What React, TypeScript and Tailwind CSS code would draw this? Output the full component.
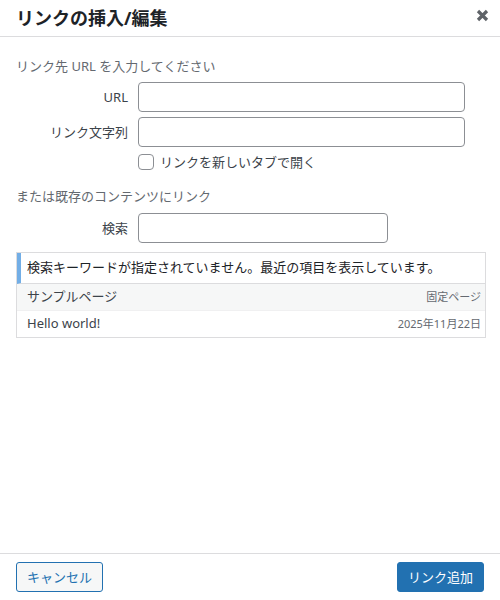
import React from "react";

export default function App() {
  return (
    <div
      className="w-[500px] h-[600px] bg-white flex flex-col text-[#3c434a] overflow-hidden"
      style={{ fontFamily: '"Noto Sans", "Noto Sans CJK JP", sans-serif' }}
    >
      {/* Header */}
      <div className="h-[37px] shrink-0 border-b border-[#dcdcde] flex items-center justify-between pl-4 pr-[11px]">
        <h1 className="text-[18px] font-bold leading-[36px] text-[#1d2327]">リンクの挿入/編集</h1>
        <button className="w-[13px] h-[13px] flex items-center justify-center text-[#5f6368] -mt-[6px]">
          <svg width="13" height="13" viewBox="0 0 13 13" fill="none" stroke="currentColor">
            <path d="M2 2L11 11M11 2L2 11" strokeWidth="3.2" strokeLinecap="butt" />
          </svg>
        </button>
      </div>

      {/* Body */}
      <div className="flex-1 px-4 pt-[19px] text-[13px]">
        <p className="leading-[20px] text-[#646970]">リンク先 URL を入力してください</p>

        <div className="mt-[6px] flex flex-col gap-[5px]">
          <div className="flex items-center gap-[10px]">
            <label className="w-[112px] text-right leading-[20px]">URL</label>
            <input className="w-[327px] h-[30px] border border-[#8c8f94] rounded-[4px] px-2 outline-none" />
          </div>
          <div className="flex items-center gap-[10px]">
            <label className="w-[112px] text-right leading-[20px]">リンク文字列</label>
            <input className="w-[327px] h-[30px] border border-[#8c8f94] rounded-[4px] px-2 outline-none" />
          </div>
        </div>

        <div className="mt-[7px] flex items-center pl-[122px] gap-[6px]">
          <span className="w-4 h-4 border border-[#8c8f94] rounded-[4px] bg-white shrink-0" />
          <span className="leading-[16px]">リンクを新しいタブで開く</span>
        </div>

        <p className="mt-[16px] leading-[20px] text-[#646970]">または既存のコンテンツにリンク</p>

        <div className="mt-[7px] flex items-center gap-[10px]">
          <label className="w-[112px] text-right leading-[20px]">検索</label>
          <input className="w-[250px] h-[30px] border border-[#8c8f94] rounded-[4px] px-2 outline-none" />
        </div>

        <div className="mt-[9px] w-[470px] border border-[#dcdcde]">
          <div className="h-[31px] border-l-4 border-[#72aee6] border-b border-b-[#dcdcde] flex items-center pl-[6px] text-[#1d2327]">
            検索キーワードが指定されていません。最近の項目を表示しています。
          </div>
          <div className="h-[27px] bg-[#f6f7f7] border-b border-[#f0f0f1] flex items-center justify-between pl-[10px] pr-[4px]">
            <span>サンプルページ</span>
            <span className="text-[11px] text-[#646970]">固定ページ</span>
          </div>
          <div className="h-[26px] flex items-center justify-between pl-[10px] pr-[4px]">
            <span>Hello world!</span>
            <span className="text-[11px] text-[#646970]">2025年11月22日</span>
          </div>
        </div>
      </div>

      {/* Footer */}
      <div className="h-[47px] shrink-0 border-t border-[#dcdcde] flex items-center justify-between px-4">
        <button className="h-[30px] px-[10px] border border-[#2271b1] rounded-[3px] bg-[#f6f7f7] text-[#2271b1] text-[13px] leading-[28px]">
          キャンセル
        </button>
        <button className="h-[30px] px-[10px] border border-[#2271b1] rounded-[3px] bg-[#2271b1] text-white text-[13px] leading-[28px]">
          リンク追加
        </button>
      </div>
    </div>
  );
}
